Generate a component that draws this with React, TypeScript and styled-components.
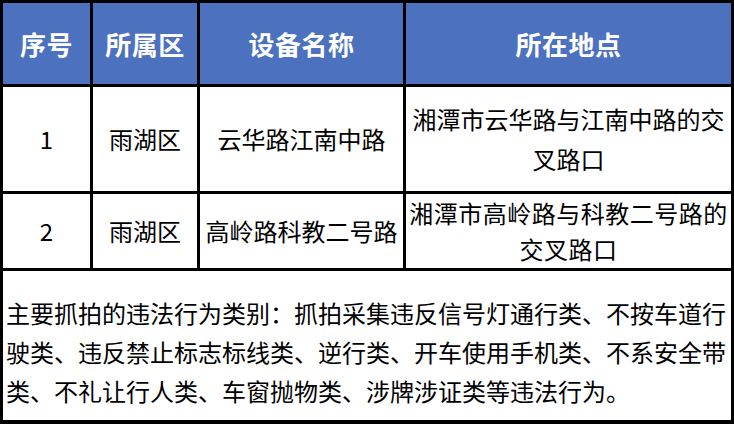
import React from "react";
import styled, { createGlobalStyle } from "styled-components";

const GlobalStyle = createGlobalStyle`
  html, body {
    margin: 0;
    padding: 0;
    background: #ffffff;
  }
  body {
    font-family: "Noto Sans CJK SC", "Noto Sans", sans-serif;
  }
`;

const Table = styled.div`
  width: 734px;
  height: 424px;
  box-sizing: border-box;
  background: #000000;
  padding: 3px 3px 4px 3px;
  display: grid;
  grid-template-columns: 87px 104px 203px 325px;
  grid-template-rows: 81px 104px 74px 149px;
  gap: 3px;
`;

const HeadCell = styled.div`
  background: #4c71bf;
  color: #ffffff;
  font-size: 26px;
  font-weight: 700;
  display: flex;
  align-items: center;
  justify-content: center;
  letter-spacing: 0.5px;
`;

const Cell = styled.div<{ $spacing?: number; $lineHeight?: number }>`
  background: #ffffff;
  color: #000000;
  font-size: 24px;
  line-height: ${(p) => p.$lineHeight ?? 40}px;
  letter-spacing: ${(p) => p.$spacing ?? 0}px;
  display: flex;
  flex-direction: column;
  align-items: center;
  justify-content: center;
  text-align: center;
  overflow: hidden;
`;

const Line = styled.span`
  display: block;
  white-space: nowrap;
`;

const Note = styled.div`
  grid-column: 1 / -1;
  background: #ffffff;
  color: #000000;
  font-size: 24px;
  line-height: 39px;
  padding: 22px 0 0 3px;
  text-align: left;
`;

const rows = [
  {
    no: "1",
    area: "雨湖区",
    name: "云华路江南中路",
    place: ["湘潭市云华路与江南中路的交", "叉路口"],
    spacing: 0,
    lineHeight: 40,
  },
  {
    no: "2",
    area: "雨湖区",
    name: "高岭路科教二号路",
    place: ["湘潭市高岭路与科教二号路的", "交叉路口"],
    spacing: 0.5,
    lineHeight: 36,
  },
];

export default function App() {
  return (
    <>
      <GlobalStyle />
      <Table>
        <HeadCell>序号</HeadCell>
        <HeadCell>所属区</HeadCell>
        <HeadCell>设备名称</HeadCell>
        <HeadCell>所在地点</HeadCell>

        {rows.map((r) => (
          <React.Fragment key={r.no}>
            <Cell>{r.no}</Cell>
            <Cell>{r.area}</Cell>
            <Cell>{r.name}</Cell>
            <Cell $spacing={r.spacing} $lineHeight={r.lineHeight}>
              {r.place.map((line) => (
                <Line key={line}>{line}</Line>
              ))}
            </Cell>
          </React.Fragment>
        ))}

        <Note>
          主要抓拍的违法行为类别：抓拍采集违反信号灯通行类、不按车道行驶类、违反禁止标志标线类、逆行类、开车使用手机类、不系安全带类、不礼让行人类、车窗抛物类、涉牌涉证类等违法行为。
        </Note>
      </Table>
    </>
  );
}
